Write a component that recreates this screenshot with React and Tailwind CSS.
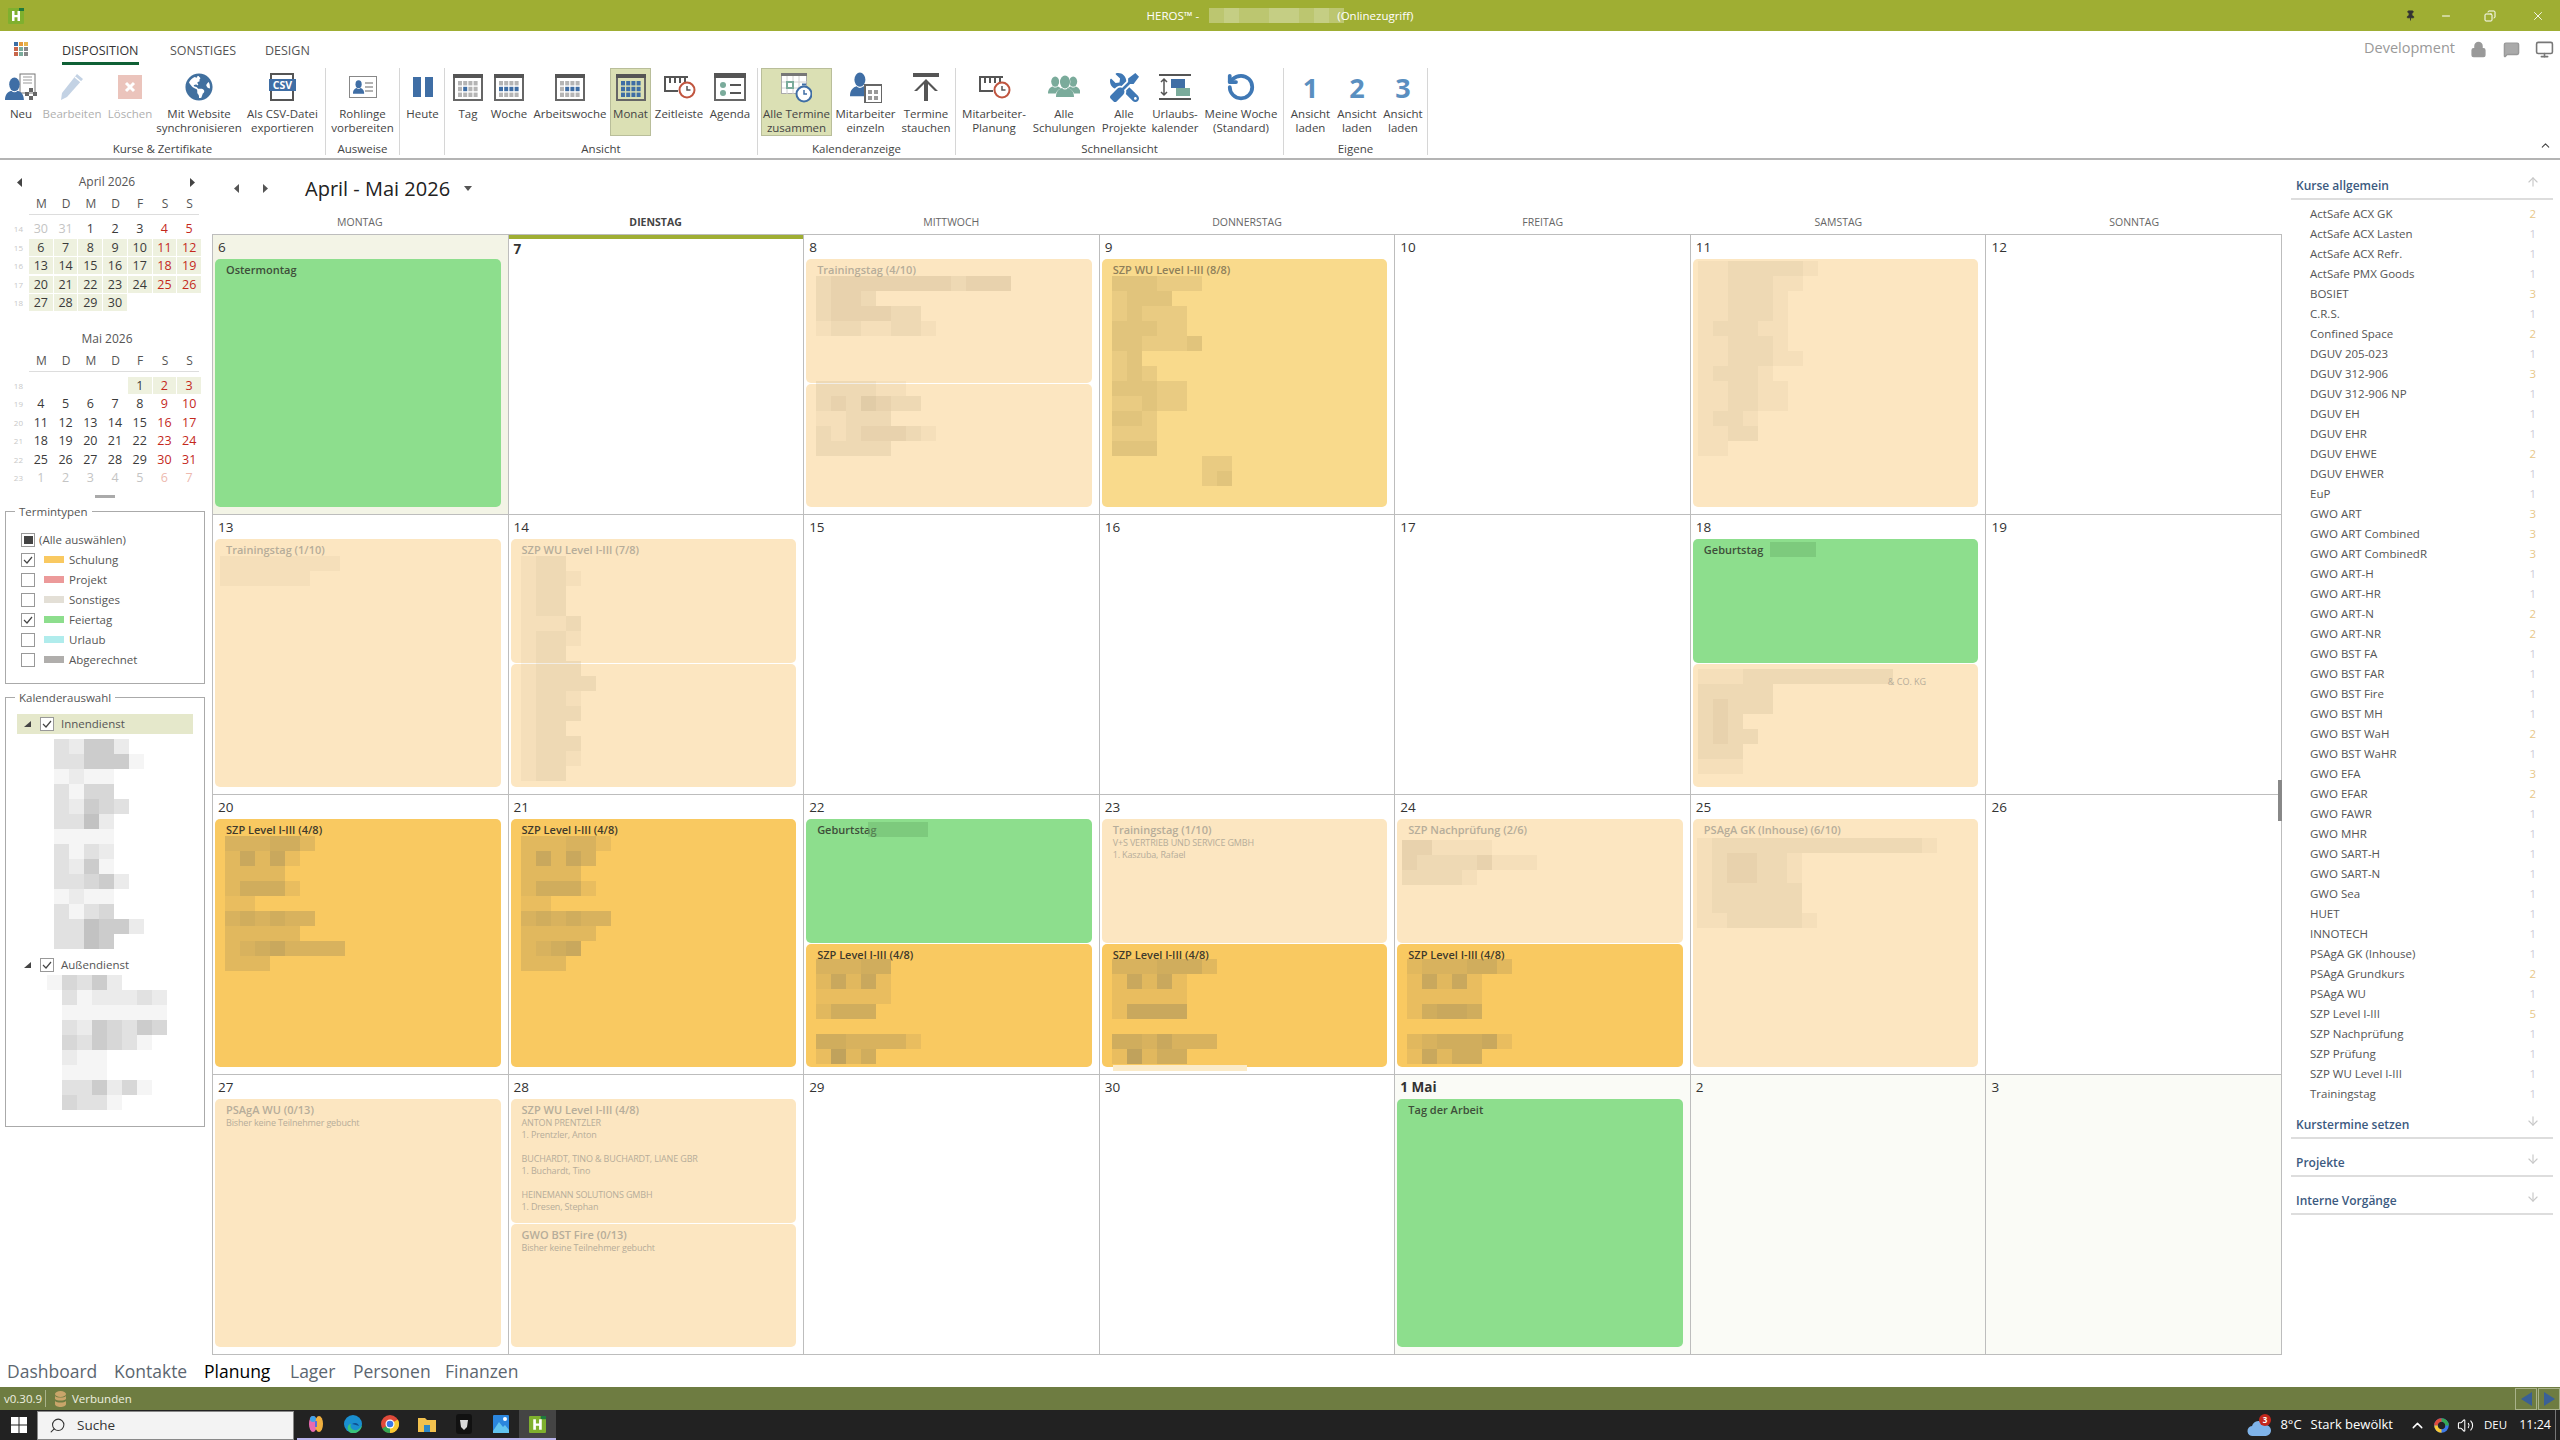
import React from 'react';
import { Search, RotateCcw, Lock, MessageSquare, Monitor, Volume2, ChevronUp, ArrowUp, ArrowDown, Pin, Minus, Copy, X } from 'lucide-react';
import { FaGlobeAmericas, FaTools } from 'react-icons/fa';

const BLUE = '#3F6EA5';
const TEAL = '#7AAB9B';

const Person = ({ x = 0, y = 0, c = BLUE, s = 1 }) => (
  <g transform={`translate(${x} ${y}) scale(${s})`} fill={c}>
    <ellipse cx="9" cy="7" rx="5" ry="6.5" />
    <path d="M0 22c0-6 3-8 6-9 2 2 4 2 6 0 3 1 6 3 6 9z" />
  </g>
);

const NeuIcon = () => (
  <svg width="33" height="28" viewBox="0 0 33 28">
    <rect x="15" y="1" width="15" height="19" fill="#fff" stroke="#777" />
    <path d="M18 4h9M18 7h9M18 10h9" stroke="#999" />
    <g fill="#666">
      <rect x="24" y="15" width="4" height="4" />
      <rect x="20" y="19" width="4" height="4" />
      <rect x="28" y="19" width="4" height="4" />
      <rect x="24" y="23" width="4" height="4" />
    </g>
    <Person x="0" y="4" s="1.05" />
  </svg>
);

const PencilIcon = () => (
  <svg width="26" height="28" viewBox="0 0 26 28">
    <path d="M18 1l6 5L8 24l-6 3 1-7z" fill="#C3D2E4" />
    <path d="M16 4l6 5" stroke="#fff" strokeWidth="1.5" />
  </svg>
);

const DeleteIcon = () => (
  <svg width="24" height="24" viewBox="0 0 24 24">
    <rect width="24" height="24" fill="#EBC4BC" />
    <path d="M8 8l8 8M16 8l-8 8" stroke="#fff" strokeWidth="3" />
  </svg>
);

const CsvIcon = () => (
  <svg width="27" height="28" viewBox="0 0 27 28">
    <rect x="2" y="1" width="22" height="26" fill="#fff" stroke="#555" strokeWidth="2" />
    <rect x="0" y="6" width="27" height="12" fill={BLUE} />
    <text x="13.5" y="16" textAnchor="middle" fontSize="10.5" fontWeight="700" fill="#fff" fontFamily="Open Sans">CSV</text>
  </svg>
);

const CardIcon = () => (
  <svg width="28" height="22" viewBox="0 0 28 22">
    <rect x=".5" y=".5" width="27" height="21" fill="#fff" stroke="#888" />
    <Person x="4" y="4" s=".62" />
    <path d="M16 7h8M16 11h8M16 15h8" stroke="#999" strokeWidth="1.5" />
  </svg>
);

const BarsIcon = () => (
  <svg width="20" height="20" viewBox="0 0 20 20">
    <rect width="8" height="20" fill={BLUE} />
    <rect x="12" width="8" height="20" fill={BLUE} />
  </svg>
);

const CalIcon = ({ on = [] }) => (
  <svg width="30" height="27" viewBox="0 0 30 27">
    <rect x="1" y="1" width="28" height="25" fill="none" stroke="#666" strokeWidth="2" />
    <rect width="30" height="4" fill="#555" />
    {[0, 1, 2].map((r) =>
      [0, 1, 2, 3].map((c) => (
        <rect
          key={`${r}${c}`}
          x={5 + c * 5.2}
          y={7 + r * 5.8}
          width="4"
          height="4.4"
          fill={on.includes(`${r}${c}`) ? BLUE : '#B5B5B5'}
        />
      ))
    )}
  </svg>
);

const ClockIcon = () => (
  <svg width="33" height="24" viewBox="0 0 33 24">
    <path d="M1 1h24v2h-2v5h-2V3h-3v5h-2V3h-3v5h-2V3H8v5H6V3H3v12h12v2H1z" fill="#555" />
    <circle cx="24" cy="15" r="7.5" fill="#fff" stroke="#C0553F" strokeWidth="2" />
    <path d="M24 11v4h3.5" fill="none" stroke="#555" strokeWidth="1.5" />
  </svg>
);

const AgendaIcon = () => (
  <svg width="32" height="28" viewBox="0 0 32 28">
    <rect x="1" y="1" width="30" height="26" fill="none" stroke="#666" strokeWidth="2" />
    <rect width="32" height="5" fill="#555" />
    <circle cx="9" cy="12" r="3" fill={TEAL} />
    <circle cx="9" cy="20" r="3" fill={TEAL} />
    <path d="M16 12h11M16 20h11" stroke="#555" strokeWidth="2" />
  </svg>
);

const AllIcon = () => (
  <svg width="31" height="30" viewBox="0 0 31 30">
    <rect x=".5" y=".5" width="25" height="20" fill="#fff" stroke="#aaa" />
    <rect width="26" height="3" fill="#777" />
    <path d="M6 3v18M12 3v18M18 3v18M1 9h25M1 15h25" stroke="#D0D0D0" />
    <rect x="6" y="9" width="6" height="6" fill="#fff" stroke={TEAL} strokeWidth="2" />
    <circle cx="23" cy="21" r="7.5" fill="#fff" stroke={BLUE} strokeWidth="2" />
    <path d="M21 10.5h4v2h-4z" fill={BLUE} />
    <path d="M23 17v4h3" fill="none" stroke={BLUE} strokeWidth="1.5" />
  </svg>
);

const PersonCalIcon = () => (
  <svg width="32" height="31" viewBox="0 0 32 31">
    <Person x="0" y="0" s="1.1" />
    <rect x="15" y="13" width="17" height="18" fill="#fff" stroke="#666" strokeWidth="2" />
    <path d="M18 18h4v4h-4zM24 18h4v4h-4zM18 24h4v4h-4zM24 24h4v4h-4z" fill="#999" />
  </svg>
);

const StauchenIcon = () => (
  <svg width="26" height="28" viewBox="0 0 26 28">
    <rect width="26" height="4" fill="#555" />
    <path d="M13 6L1 18h3l7-7v17h4V11l7 7h3z" fill="#555" />
  </svg>
);

const GroupIcon = () => (
  <svg width="32" height="26" viewBox="0 0 32 26">
    <Person x="0" y="2" c={TEAL} s=".8" />
    <Person x="18" y="2" c={TEAL} s=".8" />
    <Person x="7" y="0" c="#fff" s="1.1" />
    <Person x="8" y="1" c={TEAL} s="1" />
  </svg>
);

const UrlaubIcon = () => (
  <svg width="32" height="26" viewBox="0 0 32 26">
    <rect width="32" height="2" fill="#555" />
    <rect y="24" width="32" height="2" fill="#555" />
    <path d="M5 5v16M2 8l3-3 3 3M2 18l3 3 3-3" fill="none" stroke="#555" strokeWidth="1.5" />
    <rect x="12" y="5" width="14" height="9" fill={BLUE} />
    <rect x="17" y="14" width="14" height="8" fill={TEAL} />
  </svg>
);

const NumIcon = ({ n }) => <span className="text-[27px] font-bold leading-none text-[#5A8FC0]">{n}</span>;

const RibbonBtn = ({ w, icon, label, disabled, active }) => (
  <div className={`${w} h-[68px] shrink-0 flex flex-col items-center ${active ? 'bg-[#DBE0B4] border border-[#B9BE9A]' : ''}`}>
    <div className={`${active ? 'h-[37px]' : 'h-[38px]'} flex items-center justify-center`}>{icon}</div>
    <div className={`mt-px text-center whitespace-pre leading-[14px] text-[11.5px] ${disabled ? 'text-[#B0B0B0]' : 'text-[#444]'}`}>{label}</div>
  </div>
);

const RibbonGroup = ({ w, label, pl = '', children }) => (
  <div className={`${w} h-[87px] shrink-0 border-r border-[#D6D6D6]`}>
    <div className={`flex ${pl}`}>{children}</div>
    <div className="mt-[6px] text-center leading-[14px] text-[11.5px] text-[#444]">{label}</div>
  </div>
);

const Ribbon = () => (
  <div className="h-[129px] shrink-0 border-b-2 border-[#B4B4B4] flex flex-col">
    <div className="h-[37px] flex items-start">
      <div className="w-[62px] pl-[14px] pt-[11px]">
        <svg width="15" height="15" viewBox="0 0 15 15">
          <rect width="4" height="4" fill="#3A6EA5" />
          <rect x="5" width="4" height="4" fill="#E69A3C" />
          <rect x="10" width="4" height="4" fill="#E8B44C" />
          <rect y="5" width="4" height="4" fill="#C8664A" />
          <rect x="5" y="5" width="4" height="4" fill="#7AAB9B" />
          <rect x="10" y="5" width="4" height="4" fill="#888" />
          <rect y="10" width="4" height="4" fill="#C8664A" />
          <rect x="5" y="10" width="4" height="4" fill="#7AAB9B" />
          <rect x="10" y="10" width="4" height="4" fill="#888" />
        </svg>
      </div>
      <div className="w-[108px] pt-[10px]">
        <div className="w-fit h-[24px] border-b-[3px] border-[#0F6035] text-[12.5px] leading-[19px] text-[#333] font-medium">DISPOSITION</div>
      </div>
      <div className="w-[95px] pt-[10px] text-[12.5px] leading-[19px] text-[#555]">SONSTIGES</div>
      <div className="pt-[10px] text-[12.5px] leading-[19px] text-[#555]">DESIGN</div>
      <div className="ml-auto flex items-center h-[37px] pb-[1px] pr-[6px] text-[#999]">
        <span className="text-[14.5px] mr-[15px] -mt-[2px]">Development</span>
        <Lock size={17} className="mr-[16px]" fill="#999" />
        <MessageSquare size={17} className="mr-[15px]" fill="#aaa" />
        <Monitor size={19} className="text-[#777]" />
      </div>
    </div>
    <div className="flex">
      <RibbonGroup w="w-[326px]" label="Kurse & Zertifikate">
        <RibbonBtn w="w-[42px]" icon={<NeuIcon />} label="Neu" />
        <RibbonBtn w="w-[60px]" icon={<PencilIcon />} label="Bearbeiten" disabled />
        <RibbonBtn w="w-[56px]" icon={<DeleteIcon />} label="Löschen" disabled />
        <RibbonBtn w="w-[82px]" icon={<FaGlobeAmericas size={28} color="#41709F" />} label={'Mit Website\nsynchronisieren'} />
        <RibbonBtn w="w-[85px]" icon={<CsvIcon />} label={'Als CSV-Datei\nexportieren'} />
      </RibbonGroup>
      <RibbonGroup w="w-[74px]" label="Ausweise">
        <RibbonBtn w="w-[73px]" icon={<CardIcon />} label={'Rohlinge\nvorbereiten'} />
      </RibbonGroup>
      <RibbonGroup w="w-[45px]" label="">
        <RibbonBtn w="w-[45px]" icon={<BarsIcon />} label="Heute" />
      </RibbonGroup>
      <RibbonGroup w="w-[313px]" label="Ansicht">
        <RibbonBtn w="w-[46px]" icon={<CalIcon on={['11']} />} label="Tag" />
        <RibbonBtn w="w-[36px]" icon={<CalIcon on={['10', '11', '12', '13']} />} label="Woche" />
        <div className="w-[3px] shrink-0" />
        <RibbonBtn w="w-[80px]" icon={<CalIcon on={['11', '12', '13']} />} label="Arbeitswoche" />
        <RibbonBtn w="w-[41px]" icon={<CalIcon on={['00', '01', '02', '03', '10', '11', '12', '13', '20', '21', '22', '23']} />} label="Monat" active />
        <RibbonBtn w="w-[56px]" icon={<ClockIcon />} label="Zeitleiste" />
        <RibbonBtn w="w-[46px]" icon={<AgendaIcon />} label="Agenda" />
      </RibbonGroup>
      <RibbonGroup w="w-[198px]" label="Kalenderanzeige" pl="pl-[3px]">
        <RibbonBtn w="w-[71px]" icon={<AllIcon />} label={'Alle Termine\nzusammen'} active />
        <RibbonBtn w="w-[67px]" icon={<PersonCalIcon />} label={'Mitarbeiter\neinzeln'} />
        <RibbonBtn w="w-[54px]" icon={<StauchenIcon />} label={'Termine\nstauchen'} />
      </RibbonGroup>
      <RibbonGroup w="w-[328px]" label="Schnellansicht">
        <RibbonBtn w="w-[76px]" icon={<ClockIcon />} label={'Mitarbeiter-\nPlanung'} />
        <RibbonBtn w="w-[64px]" icon={<GroupIcon />} label={'Alle\nSchulungen'} />
        <RibbonBtn w="w-[56px]" icon={<FaTools size={29} color="#3F78B5" className="-scale-x-100" />} label={'Alle\nProjekte'} />
        <RibbonBtn w="w-[46px]" icon={<UrlaubIcon />} label={'Urlaubs-\nkalender'} />
        <RibbonBtn w="w-[86px]" icon={<RotateCcw size={30} strokeWidth={3} color="#3F78B5" />} label={'Meine Woche\n(Standard)'} />
      </RibbonGroup>
      <RibbonGroup w="w-[144px]" label="Eigene" pl="pl-[3px]">
        <RibbonBtn w="w-[47px]" icon={<NumIcon n="1" />} label={'Ansicht\nladen'} />
        <RibbonBtn w="w-[46px]" icon={<NumIcon n="2" />} label={'Ansicht\nladen'} />
        <RibbonBtn w="w-[46px]" icon={<NumIcon n="3" />} label={'Ansicht\nladen'} />
      </RibbonGroup>
      <div className="flex-1 flex items-end justify-end pr-[8px] pb-[3px]">
        <ChevronUp size={13} className="text-[#444]" />
      </div>
    </div>
  </div>
);

// pixelated (blurred out) text, one digit per block, digit = strength
const Mosaic = ({ rows, tone, className = '' }) => (
  <div className={className}>
    {rows.map((row, i) => (
      <div key={i} className="flex h-[15px]">
        {row.split('').map((d, j) => (
          <div key={j} className={`w-[15px] h-[15px] shrink-0 ${tone}`} style={{ opacity: Number(d) / 10 }} />
        ))}
      </div>
    ))}
  </div>
);

const Arrow = ({ left, c = '#444' }) => (
  <svg width="5" height="9" viewBox="0 0 5 9">
    <path d={left ? 'M5 0v9L0 4.5z' : 'M0 0v9l5-4.5z'} fill={c} />
  </svg>
);

const HEAD = ['M', 'D', 'M', 'D', 'F', 'S', 'S'];

const MiniMonth = ({ title, weeks, nav, hl }) => (
  <div>
    <div className="h-[22px] flex items-center justify-between pl-[17px] pr-[17px] text-[#555] text-[12px]">
      <span className="w-[5px]">{nav && <Arrow left />}</span>
      <span className="pl-[2px]">{title}</span>
      <span className="w-[5px]">{nav && <Arrow />}</span>
    </div>
    <div className="ml-[29px] w-[173px] h-[21px] grid grid-cols-7 text-center text-[12px] text-[#555] leading-[21px]">
      {HEAD.map((h, i) => (
        <span key={i}>{h}</span>
      ))}
    </div>
    <div className="ml-[29px] w-[170px] h-px bg-[#DDD]" />
    <div className="mt-[5px]">
      {weeks.map(([wk, days]) => (
        <div key={wk} className="flex h-[18.5px]">
          <div className="w-[29px] pr-[6px] text-right text-[8px] leading-[17px] text-[#C8C8C8]">{wk}</div>
          <div className="w-[173px] grid grid-cols-7">
            {days.map((d, i) => {
              const outside = d.startsWith('~');
              const label = outside ? d.slice(1) : d;
              const weekend = i > 4;
              let color = weekend ? 'text-[#C4281C]' : 'text-[#3A3A3A]';
              if (outside) color = weekend ? 'text-[#EDB9AF]' : 'text-[#C4C4C4]';
              return (
                <div key={i} className={`h-[17px] mr-px text-center text-[12.5px] leading-[17px] ${color} ${label && hl(label, outside) ? 'bg-[#EEF1DF]' : ''}`}>
                  {label}
                </div>
              );
            })}
          </div>
        </div>
      ))}
    </div>
  </div>
);

const Check = ({ checked, square }) => (
  <span className="w-[14px] h-[14px] shrink-0 border border-[#999] bg-white flex items-center justify-center">
    {checked && (
      <svg width="10" height="8" viewBox="0 0 10 8">
        <path d="M1 4l3 3 5-6" fill="none" stroke="#444" strokeWidth="1.2" />
      </svg>
    )}
    {square && <span className="w-[9px] h-[8px] bg-[#444]" />}
  </span>
);

const TYPES = [
  ['Schulung', 'bg-[#F9C961]', true],
  ['Projekt', 'bg-[#EC9A9A]', false],
  ['Sonstiges', 'bg-[#E3DFD6]', false],
  ['Feiertag', 'bg-[#8DDE8D]', true],
  ['Urlaub', 'bg-[#B0ECEC]', false],
  ['Abgerechnet', 'bg-[#B0AEAC]', false],
];

const Tri = () => (
  <svg width="7" height="6" viewBox="0 0 7 6" className="shrink-0">
    <path d="M7 0v6H0z" fill="#444" />
  </svg>
);

const INNEN = ['32552', '335551', '1211', '3144', '32543', '3362', '1111', '3132', '3251', '33452', '1211', '3134', '336552', '3365'];
const AUSSEN = ['14352', '03122232', '01111111', '03254354', '0435431', '02110', '01110', '0335241', '04331'];

const LeftPanel = () => (
  <div className="w-[212px] shrink-0 flex flex-col pt-[11px] text-[#555]">
    <MiniMonth
      title="April 2026"
      nav
      hl={(d, o) => !o && Number(d) >= 6}
      weeks={[
        ['14', ['~30', '~31', '1', '2', '3', '4', '5']],
        ['15', ['6', '7', '8', '9', '10', '11', '12']],
        ['16', ['13', '14', '15', '16', '17', '18', '19']],
        ['17', ['20', '21', '22', '23', '24', '25', '26']],
        ['18', ['27', '28', '29', '30', '', '', '']],
      ]}
    />
    <div className="h-[15px]" />
    <MiniMonth
      title="Mai 2026"
      hl={(d, o) => !o && Number(d) <= 3}
      weeks={[
        ['18', ['', '', '', '', '1', '2', '3']],
        ['19', ['4', '5', '6', '7', '8', '9', '10']],
        ['20', ['11', '12', '13', '14', '15', '16', '17']],
        ['21', ['18', '19', '20', '21', '22', '23', '24']],
        ['22', ['25', '26', '27', '28', '29', '30', '31']],
        ['23', ['~1', '~2', '~3', '~4', '~5', '~6', '~7']],
      ]}
    />
    <div className="mt-[7px] mx-auto w-[20px] h-[3px] bg-[#AAA] -translate-x-px" />
    <fieldset className="mt-[6px] ml-[5px] w-[200px] h-[180px] border border-[#AAA]">
      <legend className="ml-[9px] px-[4px] text-[11.5px] leading-[16px]">Termintypen</legend>
      <div className="pl-[15px] pt-[10px] text-[11.5px]">
        <div className="h-[20px] flex items-center gap-[4px]">
          <Check square />
          <span>(Alle auswählen)</span>
        </div>
        {TYPES.map(([name, bg, on]) => (
          <div key={name} className="h-[20px] flex items-center">
            <Check checked={on} />
            <span className={`ml-[9px] w-[20px] h-[7px] ${bg}`} />
            <span className="ml-[5px]">{name}</span>
          </div>
        ))}
      </div>
    </fieldset>
    <fieldset className="mt-[6px] ml-[5px] w-[200px] h-[437px] border border-[#AAA]">
      <legend className="ml-[9px] px-[4px] text-[11.5px] leading-[16px]">Kalenderauswahl</legend>
      <div className="text-[11.5px]">
        <div className="mt-[8px] ml-[11px] w-[176px] h-[20px] pl-[7px] flex items-center bg-[#E5E8CB]">
          <Tri />
          <span className="ml-[9px]"><Check checked /></span>
          <span className="ml-[7px]">Innendienst</span>
        </div>
        <Mosaic className="mt-[5px] ml-[48px]" tone="bg-[#9A9A9A]" rows={INNEN} />
        <div className="mt-[6px] ml-[11px] h-[20px] pl-[7px] flex items-center">
          <Tri />
          <span className="ml-[9px]"><Check checked /></span>
          <span className="ml-[7px]">Außendienst</span>
        </div>
        <Mosaic className="ml-[41px]" tone="bg-[#9A9A9A]" rows={AUSSEN} />
      </div>
    </fieldset>
  </div>
);

const STYLES = {
  green: 'bg-[#8DDE8D] text-[#3E4E3A]',
  light: 'bg-[#FCE6C1] text-[#B6AD9A]',
  mid: 'bg-[#F9DA8C] text-[#8E7F5A]',
  orange: 'bg-[#F9C961] text-[#3F3A2C]',
};

const Ev = ({ kind, title, sub, children }) => (
  <div className={`relative flex-1 min-h-0 rounded-[5px] pl-[11px] pt-[3px] ${STYLES[kind]}`}>
    <div className="h-[14px] text-[11px] font-semibold leading-[15px] whitespace-nowrap">{title}</div>
    {sub && <div className="pt-[1px] whitespace-pre text-[9px] tracking-[-0.15px] leading-[12px]">{sub}</div>}
    {children}
  </div>
);

const LIGHT_TONE = 'bg-[#B8A480]';
const ORANGE_TONE = 'bg-[#A8925A]';

const OrangeBody = ({ rows = ['4445553', '26362', '22222', '26666', '00000', '5546444', '27355'] }) => (
  <Mosaic className="-ml-[1px] -mt-[2px]" tone={ORANGE_TONE} rows={rows} />
);

const Day = ({ n, tint = '', today, bold, children }) => (
  <div className={`h-[280px] min-w-0 flex flex-col border-r border-b border-[#BDBDBD] ${tint}`}>
    {today && <div className="h-[4px] bg-[#9FAE33]" />}
    <div className={`${today ? 'h-[20px]' : 'h-[24px]'} pl-[5px] ${today ? 'leading-[20px]' : 'leading-[24px]'} text-[13.5px] text-[#333] ${bold ? 'font-bold' : ''}`}>{n}</div>
    <div className="flex-1 min-h-0 flex flex-col gap-px pl-[2px] pr-[7px] pb-[7px]">{children}</div>
  </div>
);

const Calendar = () => (
  <div className="w-[2070px] shrink-0">
    <div className="h-[54px] flex items-center pl-[22px] pt-[3px]">
      <Arrow left c="#555" />
      <span className="ml-[24px]"><Arrow c="#555" /></span>
      <span className="ml-[37px] text-[20px] text-[#222]">April - Mai 2026</span>
      <svg width="8" height="5" viewBox="0 0 8 5" className="ml-[14px]">
        <path d="M0 0h8L4 5z" fill="#555" />
      </svg>
    </div>
    <div className="h-[20px] grid grid-cols-7 text-center text-[10.5px] leading-[16px] text-[#666]">
      <span>MONTAG</span>
      <span className="font-bold text-[#444]">DIENSTAG</span>
      <span>MITTWOCH</span>
      <span>DONNERSTAG</span>
      <span>FREITAG</span>
      <span>SAMSTAG</span>
      <span>SONNTAG</span>
    </div>
    <div className="grid grid-cols-7 border-l border-t border-[#BDBDBD]">
      <Day n="6" tint="bg-[#F3F4E6]"><Ev kind="green" title="Ostermontag" /></Day>
      <Day n="7" today bold />
      <Day n="8">
        <Ev kind="light" title="Trainingstag (4/10)">
          <Mosaic tone={LIGHT_TONE} className="-ml-[1px]" rows={['23333333323330', '23320', '2333322', '12211221']} />
        </Ev>
        <Ev kind="light" title="">
          <Mosaic tone={LIGHT_TONE} className="-ml-[1px] -mt-[20px]" rows={['2222110', '2324322', '112220', '21233321', '222220']} />
        </Ev>
      </Day>
      <Day n="9">
        <Ev kind="mid" title="SZP WU Level I-III (8/8)">
          <Mosaic tone={ORANGE_TONE} className="-ml-[1px]" rows={['333222', '23330', '23222', '33322', '332223', '2300', '2320', '33322', '22322', '3320', '2220', '3330', '00000022', '00000023']} />
        </Ev>
      </Day>
      <Day n="10" />
      <Day n="11">
        <Ev kind="light" title="">
          <Mosaic tone={LIGHT_TONE} className="-ml-[6px] -mt-[15px]" rows={['11222221', '1122211', '1122210', '112221', '1222110', '112221', '1122211', '122210', '1122110', '112211', '1221', '1122', '11']} />
        </Ev>
      </Day>
      <Day n="12" />

      <Day n="13">
        <Ev kind="light" title="Trainingstag (1/10)">
          <Mosaic tone={LIGHT_TONE} className="-ml-[6px]" rows={['11111111', '1111110']} />
        </Ev>
      </Day>
      <Day n="14">
        <Ev kind="light" title="SZP WU Level I-III (7/8)">
          <Mosaic tone={LIGHT_TONE} className="-ml-[1px]" rows={['1220', '1221', '1220', '122', '1112', '1221', '122']} />
        </Ev>
        <Ev kind="light" title="">
          <Mosaic tone={LIGHT_TONE} className="-ml-[1px] -mt-[20px]" rows={['1222', '12222', '1221', '1222', '122', '1222', '1221', '122']} />
        </Ev>
      </Day>
      <Day n="15" />
      <Day n="16" />
      <Day n="17" />
      <Day n="18">
        <Ev kind="green" title={<span className="flex items-center">Geburtstag<span className="ml-[7px] w-[46px] h-[15px] bg-[#6DB56D] opacity-50" /></span>} />
        <Ev kind="light" title="">
          <Mosaic tone={LIGHT_TONE} className="-ml-[6px] -mt-[12px]" rows={['1112222222222', '22222', '232220', '232', '2322', '2220', '111']} />
          <span className="absolute left-[195px] top-[11px] text-[9px] text-[#B6AD9A]">&amp; CO. KG</span>
        </Ev>
      </Day>
      <Day n="19" />

      <Day n="20">
        <Ev kind="orange" title="SZP Level I-III (4/8)">
          <Mosaic tone={ORANGE_TONE} className="-ml-[1px]" rows={['4445530', '36362', '33330', '35552', '2200', '4545440', '33333', '34564444', '3330']} />
        </Ev>
      </Day>
      <Day n="21">
        <Ev kind="orange" title="SZP Level I-III (4/8)">
          <Mosaic tone={ORANGE_TONE} className="-ml-[1px]" rows={['3334420', '36364', '33330', '35552', '2200', '4545440', '33333', '3456', '3330']} />
        </Ev>
      </Day>
      <Day n="22">
        <Ev kind="green" title={<span className="flex items-center">Geburtstag<span className="-ml-[9px] w-[60px] h-[15px] bg-[#6DB56D] opacity-50" /></span>} />
        <Ev kind="orange" title="SZP Level I-III (4/8)">
          <OrangeBody rows={['44455', '36362', '22222', '3555', '0000', '5544442', '2735']} />
        </Ev>
      </Day>
      <Day n="23">
        <Ev kind="light" title="Trainingstag (1/10)" sub={'V+S VERTRIEB UND SERVICE GMBH\n1. Kaszuba, Rafael'} />
        <Ev kind="orange" title="SZP Level I-III (4/8)">
          <OrangeBody />
          <div className="absolute left-[11px] -bottom-[4px] w-[134px] h-[6px] bg-[#FBEBC8]" />
        </Ev>
      </Day>
      <Day n="24">
        <Ev kind="light" title="SZP Nachprüfung (2/6)">
          <Mosaic tone={LIGHT_TONE} className="-ml-[6px] mt-[4px]" rows={['3311110', '3222231110', '22221']} />
        </Ev>
        <Ev kind="orange" title="SZP Level I-III (4/8)">
          <OrangeBody rows={['3444553', '26362', '22222', '25665', '00000', '3455562', '26355']} />
        </Ev>
      </Day>
      <Day n="25">
        <Ev kind="light" title="PSAgA GK (Inhouse) (6/10)">
          <Mosaic tone={LIGHT_TONE} className="-ml-[7px] mt-[2px]" rows={['1222222222222221', '12332210', '12332210', '12222220', '12222220', '11222221']} />
        </Ev>
      </Day>
      <Day n="26" />

      <Day n="27">
        <Ev kind="light" title="PSAgA WU (0/13)" sub="Bisher keine Teilnehmer gebucht" />
      </Day>
      <Day n="28">
        <Ev
          kind="light"
          title="SZP WU Level I-III (4/8)"
          sub={'ANTON PRENTZLER\n1. Prentzler, Anton\n\nBUCHARDT, TINO & BUCHARDT, LIANE GBR\n1. Buchardt, Tino\n\nHEINEMANN SOLUTIONS GMBH\n1. Dresen, Stephan'}
        />
        <Ev kind="light" title="GWO BST Fire (0/13)" sub="Bisher keine Teilnehmer gebucht" />
      </Day>
      <Day n="29" />
      <Day n="30" />
      <Day n="1 Mai" tint="bg-[#FAFBF6]" bold>
        <Ev kind="green" title="Tag der Arbeit" />
      </Day>
      <Day n="2" tint="bg-[#FAFBF6]" />
      <Day n="3" tint="bg-[#FAFBF6]" />
    </div>
  </div>
);

const COURSES = [
  ['ActSafe ACX GK', 2], ['ActSafe ACX Lasten', 1], ['ActSafe ACX Refr.', 1], ['ActSafe PMX Goods', 1], ['BOSIET', 3],
  ['C.R.S.', 1], ['Confined Space', 2], ['DGUV 205-023', 1], ['DGUV 312-906', 3], ['DGUV 312-906 NP', 1],
  ['DGUV EH', 1], ['DGUV EHR', 1], ['DGUV EHWE', 2], ['DGUV EHWER', 1], ['EuP', 1],
  ['GWO ART', 3], ['GWO ART Combined', 3], ['GWO ART CombinedR', 3], ['GWO ART-H', 1], ['GWO ART-HR', 1],
  ['GWO ART-N', 2], ['GWO ART-NR', 2], ['GWO BST FA', 1], ['GWO BST FAR', 1], ['GWO BST Fire', 1],
  ['GWO BST MH', 1], ['GWO BST WaH', 2], ['GWO BST WaHR', 1], ['GWO EFA', 3], ['GWO EFAR', 2],
  ['GWO FAWR', 1], ['GWO MHR', 1], ['GWO SART-H', 1], ['GWO SART-N', 1], ['GWO Sea', 1],
  ['HUET', 1], ['INNOTECH', 1], ['PSAgA GK (Inhouse)', 1], ['PSAgA Grundkurs', 2], ['PSAgA WU', 1],
  ['SZP Level I-III', 5], ['SZP Nachprüfung', 1], ['SZP Prüfung', 1], ['SZP WU Level I-III', 1], ['Trainingstag', 1],
];

const SectionHead = ({ label, open, h }) => (
  <div className={`${h} flex items-end justify-between border-b-2 border-[#DDD] pl-[5px] pr-[13px] pb-[4px]`}>
    <span className="text-[12px] font-semibold leading-[16px] text-[#3C5A80]">{label}</span>
    {open ? <ArrowUp size={14} className="text-[#C8C8C8] mb-[5px]" /> : <ArrowDown size={14} className="text-[#C8C8C8] mb-[5px]" />}
  </div>
);

const RightPanel = () => (
  <div className="flex-1 pl-[9px] pr-[7px]">
    <SectionHead label="Kurse allgemein" open h="h-[40px]" />
    <div className="pt-[4px]">
      {COURSES.map(([name, count]) => (
        <div key={name} className="h-[20px] flex items-center justify-between pl-[19px] pr-[17px] text-[11.5px] text-[#555]">
          <span>{name}</span>
          <span className={count > 1 ? 'text-[#E8C88A]' : 'text-[#CFCDD8]'}>{count}</span>
        </div>
      ))}
    </div>
    <SectionHead label="Kurstermine setzen" h="h-[35px]" />
    <SectionHead label="Projekte" h="h-[38px]" />
    <SectionHead label="Interne Vorgänge" h="h-[38px]" />
  </div>
);

const BottomTabs = () => (
  <div className="h-[33px] shrink-0 flex items-center pl-[7px] pt-[2px] text-[17.5px] text-[#5C6670]">
    <span className="w-[107px]">Dashboard</span>
    <span className="w-[90px]">Kontakte</span>
    <span className="w-[86px] text-black font-medium">Planung</span>
    <span className="w-[63px]">Lager</span>
    <span className="w-[92px]">Personen</span>
    <span>Finanzen</span>
  </div>
);

const StatusBar = () => (
  <div className="h-[23px] shrink-0 bg-[#6E7C41] flex items-center text-[11.5px] text-[#EEF0E0]">
    <span className="w-[46px] pl-[4px] border-r border-[#A9B28A]">v0.30.9</span>
    <svg width="11" height="16" viewBox="0 0 11 16" className="ml-[9px]">
      <ellipse cx="5.5" cy="3" rx="5.5" ry="3" fill="#C9A56A" />
      <path d="M0 5c2 2 9 2 11 0v3c-2 2-9 2-11 0zM0 10c2 2 9 2 11 0v3c0 4-11 4-11 0z" fill="#C9A56A" />
    </svg>
    <span className="ml-[6px]">Verbunden</span>
    <div className="ml-auto flex">
      <div className="w-[22px] h-[22px] mr-px border border-[#A9B28A] flex items-center justify-center">
        <svg width="11" height="14" viewBox="0 0 11 14"><path d="M11 0v14L0 7z" fill="#3A6096" /></svg>
      </div>
      <div className="w-[22px] h-[22px] border border-[#A9B28A] flex items-center justify-center">
        <svg width="11" height="14" viewBox="0 0 11 14"><path d="M0 0v14l11-7z" fill="#3A6096" /></svg>
      </div>
    </div>
  </div>
);

const TaskIcon = ({ active, w = 'w-[37px]', children }) => (
  <div className={`${w} h-[30px] flex items-center justify-center border-b-2 border-[#B9B3EA] ${active ? 'bg-[#444]' : ''}`}>{children}</div>
);

const HeroLogo = ({ size = 16 }) => (
  <svg width={size} height={size} viewBox="0 0 16 16">
    <rect width="16" height="16" rx="1" fill="#7FB02E" />
    <rect x="11" width="5" height="3" fill="#1F7A3C" />
    <path d="M4 3h2.5v4h3V3H12v10H9.5V9.2h-3V13H4z" fill="#fff" />
  </svg>
);

const Taskbar = () => (
  <div className="h-[30px] shrink-0 bg-[#222] flex items-center text-white">
    <div className="w-[37px] flex justify-center">
      <svg width="16" height="16" viewBox="0 0 16 16" fill="#fff">
        <rect width="7.5" height="7.5" />
        <rect x="8.5" width="7.5" height="7.5" />
        <rect y="8.5" width="7.5" height="7.5" />
        <rect x="8.5" y="8.5" width="7.5" height="7.5" />
      </svg>
    </div>
    <div className="w-[257px] h-[29px] bg-[#F3F3F3] flex items-center pl-[11px] text-[13.5px] text-[#333] border border-[#888]">
      <Search size={17} className="-scale-x-100" strokeWidth={1.5} />
      <span className="ml-[11px]">Suche</span>
    </div>
    <div className="flex ml-[3px]">
      <TaskIcon w="w-[37px]">
        <svg width="16" height="18" viewBox="0 0 16 18">
          <ellipse cx="5" cy="9" rx="4" ry="8" fill="#E86AB0" />
          <ellipse cx="11" cy="9" rx="4" ry="8" fill="#F0B040" />
          <path d="M7 6h2v6H7z" fill="#5B6CE0" />
          <circle cx="5" cy="4" r="3" fill="#3FA4E8" />
        </svg>
      </TaskIcon>
      <TaskIcon>
        <svg width="18" height="18" viewBox="0 0 18 18">
          <circle cx="9" cy="9" r="9" fill="#1A8FD0" />
          <path d="M18 10a9 9 0 0 1-11 8c-5-2-4-9 0-9-2 4 2 7 6 6 2-.5 4-3 5-5z" fill="#39C37A" />
          <path d="M8 9c3-2 6-1 7 2-2-1-4-1-7-2z" fill="#0E4F90" />
        </svg>
      </TaskIcon>
      <TaskIcon>
        <svg width="18" height="18" viewBox="0 0 18 18">
          <circle cx="9" cy="9" r="9" fill="#E04A3A" />
          <path d="M9 9L1.2 13.5A9 9 0 0 0 9 18z" fill="#35A853" />
          <path d="M9 9v9a9 9 0 0 0 7.8-13.5z" fill="#F9C932" />
          <circle cx="9" cy="9" r="4.5" fill="#fff" />
          <circle cx="9" cy="9" r="3.3" fill="#3B78E7" />
        </svg>
      </TaskIcon>
      <TaskIcon>
        <svg width="18" height="16" viewBox="0 0 18 16">
          <path d="M0 2h7l2 2h9v12H0z" fill="#F2C14E" />
          <rect x="6" y="9" width="6" height="7" fill="#2E88C8" />
        </svg>
      </TaskIcon>
      <TaskIcon>
        <svg width="16" height="20" viewBox="0 0 16 20">
          <rect width="16" height="20" rx="3" fill="#111" />
          <path d="M4 6h8l-1 7-3 3-3-3z" fill="#D8D8D8" />
        </svg>
      </TaskIcon>
      <TaskIcon>
        <svg width="16" height="18" viewBox="0 0 16 18">
          <rect width="16" height="18" rx="1" fill="#2B86DE" />
          <path d="M0 16l6-9 4 5 2-2 4 5v3H0z" fill="#62C4F0" />
          <circle cx="12" cy="4" r="2" fill="#fff" />
        </svg>
      </TaskIcon>
      <TaskIcon active><HeroLogo size={17} /></TaskIcon>
    </div>
    <div className="ml-auto flex items-center text-[13px] h-full">
      <svg width="25" height="23" viewBox="0 0 25 23" className="mr-[8px]">
        <path d="M6 22a5 5 0 0 1-1-10 7 7 0 0 1 13-1 5.5 5.5 0 0 1 1 11z" fill="#7FB4EA" />
        <circle cx="18" cy="6" r="6" fill="#C4281C" />
        <text x="18" y="9" textAnchor="middle" fontSize="8" fontWeight="700" fill="#fff">3</text>
      </svg>
      <span>8°C</span>
      <span className="ml-[9px]">Stark bewölkt</span>
      <ChevronUp size={17} className="ml-[16px]" />
      <svg width="15" height="15" viewBox="0 0 15 15" className="ml-[8px]">
        <circle cx="7.5" cy="7.5" r="5.5" fill="none" stroke="#3B78E7" strokeWidth="3.5" />
        <path d="M7.5 2a5.5 5.5 0 0 1 5.5 5.500" fill="none" stroke="#35A853" strokeWidth="3.5" />
        <path d="M2 7.500A5.5 5.5 0 0 1 7.5 2" fill="none" stroke="#E04A3A" strokeWidth="3.5" />
        <path d="M7.5 13A5.5 5.5 0 0 1 2 7.500" fill="none" stroke="#F9C932" strokeWidth="3.5" />
      </svg>
      <Volume2 size={17} strokeWidth={1.5} className="ml-[8px]" />
      <span className="ml-[10px] text-[11.5px]">DEU</span>
      <span className="ml-[12px] mr-[4px] text-[12.5px]">11:24</span>
      <span className="w-px h-[30px] bg-[#777] mr-[4px]" />
    </div>
  </div>
);

const TitleBar = () => (
  <div className="h-[31px] shrink-0 bg-[#9FAE33] grid grid-cols-[1fr_auto_1fr] items-center text-white text-[11.5px]">
    <div className="pl-[8px]"><HeroLogo /></div>
    <div className="flex items-center">
      <span>HEROS™ -</span>
      <Mosaic className="ml-[10px]" tone="bg-white" rows={['343344343']} />
      <span className="-ml-[7px]">(Onlinezugriff)</span>
    </div>
    <div className="flex justify-end items-center pr-[15px]">
      <Pin size={11} className="mr-[24px] text-[#333]" fill="#333" />
      <Minus size={12} className="mr-[32px]" />
      <Copy size={12} className="mr-[35px] -scale-x-100" />
      <X size={14} strokeWidth={1.5} />
    </div>
  </div>
);

const App = () => (
  <div className="relative w-[2560px] h-[1440px] flex flex-col overflow-hidden bg-white font-['Open_Sans','Noto_Sans',sans-serif]">
    <TitleBar />
    <Ribbon />
    <div className="flex-1 min-h-0 flex">
      <LeftPanel />
      <Calendar />
      <RightPanel />
    </div>
    <BottomTabs />
    <StatusBar />
    <Taskbar />
    <div className="absolute left-[2278px] top-[780px] w-[4px] h-[41px] bg-[#888]" />
  </div>
);

export default App;
